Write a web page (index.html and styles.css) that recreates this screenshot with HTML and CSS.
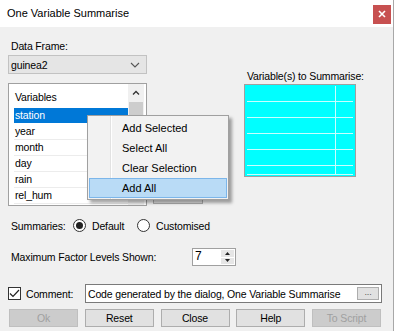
FILE: index.html
```html
<!DOCTYPE html>
<html lang="en">
<head>
    <meta charset="UTF-8">
    <title>One Variable Summarise</title>
    <link rel="stylesheet" href="styles.css">
</head>
<body>
    <div class="window">
        <div class="titlebar">
            <span class="title">One Variable Summarise</span>
            <span class="close-btn">
                <svg width="8" height="8" viewBox="0 0 8 8"><path d="M1 1 L7 7 M7 1 L1 7" stroke="#fff" stroke-width="1.6"/></svg>
            </span>
        </div>

        <div class="dialog">
            <div class="top-section">
                <div class="left-col">
                    <div class="label">Data Frame:</div>
                    <div class="combo">
                        <span>guinea2</span>
                        <svg width="10" height="6" viewBox="0 0 10 6"><path d="M1 1 L5 5 L9 1" fill="none" stroke="#555" stroke-width="1.1"/></svg>
                    </div>
                    <div class="listbox">
                        <div class="list-area">
                            <div class="list-header">Variables</div>
                            <div class="list-row selected">station</div>
                            <div class="list-row">year</div>
                            <div class="list-row">month</div>
                            <div class="list-row">day</div>
                            <div class="list-row">rain</div>
                            <div class="list-row">rel_hum</div>
                        </div>
                        <div class="scrollbar">
                            <div class="scroll-arrow">
                                <svg width="8" height="5" viewBox="0 0 8 5"><path d="M1 4.5 L4 1.5 L7 4.5" fill="none" stroke="#333" stroke-width="1.3"/></svg>
                            </div>
                            <div class="scroll-thumb"></div>
                        </div>
                    </div>
                </div>

                <div class="mid-col">
                    <div class="add-btn"></div>
                </div>

                <div class="right-col">
                    <div class="label">Variable(s) to Summarise:</div>
                    <div class="receiver">
                        <div class="cell"></div><div class="cell last"></div>
                        <div class="cell"></div><div class="cell last"></div>
                        <div class="cell"></div><div class="cell last"></div>
                        <div class="cell"></div><div class="cell last"></div>
                        <div class="cell"></div><div class="cell last"></div>
                        <div class="cell"></div><div class="cell last"></div>
                    </div>
                </div>
            </div>

            <div class="summaries-row">
                <span class="summaries-label">Summaries:</span>
                <span class="radio checked"></span>
                <span class="radio-text">Default</span>
                <span class="radio"></span>
                <span class="radio-text">Customised</span>
            </div>

            <div class="levels-row">
                <span class="levels-label">Maximum Factor Levels Shown:</span>
                <div class="updown">
                    <span class="updown-value">7</span>
                    <div class="spin">
                        <div class="spin-btn">
                            <svg width="5" height="3" viewBox="0 0 5 3"><path d="M0 3 L2.5 0 L5 3 Z" fill="#222"/></svg>
                        </div>
                        <div class="spin-btn">
                            <svg width="5" height="3" viewBox="0 0 5 3"><path d="M0 0 L2.5 3 L5 0 Z" fill="#222"/></svg>
                        </div>
                    </div>
                </div>
            </div>

            <div class="comment-row">
                <span class="checkbox">
                    <svg width="11" height="9" viewBox="0 0 11 9"><path d="M1 4.5 L4 7.5 L10 1" fill="none" stroke="#222" stroke-width="1.2"/></svg>
                </span>
                <span class="comment-label">Comment:</span>
                <div class="comment-box">
                    <span>Code generated by the dialog, One Variable Summarise</span>
                    <span class="dots-btn">...</span>
                </div>
            </div>

            <div class="button-row">
                <div class="btn disabled">Ok</div>
                <div class="btn">Reset</div>
                <div class="btn">Close</div>
                <div class="btn">Help</div>
                <div class="btn disabled">To Script</div>
            </div>
        </div>

        <div class="context-menu">
            <div class="menu-item">Add Selected</div>
            <div class="menu-item">Select All</div>
            <div class="menu-item">Clear Selection</div>
            <div class="menu-item hover">Add All</div>
        </div>
    </div>
</body>
</html>
```

FILE: styles.css
```css
body {
    margin: 0;
    background: #f0f0f0;
    font-family: 'Liberation Sans', Arial, sans-serif;
    font-size: 10.5px;
    letter-spacing: -0.15px;
    color: #000;
    white-space: nowrap;
}

.window {
    width: 393px;
    height: 331px;
    border-right: 1px solid #a8a8a8;
    position: relative;
    overflow: hidden;
}

.titlebar {
    height: 27px;
    background: #fff;
    display: flex;
    align-items: center;
    justify-content: space-between;
    padding-left: 7px;
    padding-right: 2px;
}

.title {
    font-size: 11px;
    letter-spacing: 0;
    margin-top: -1px;
}

.close-btn {
    width: 18px;
    height: 19px;
    background: #c75050;
    display: flex;
    align-items: center;
    justify-content: center;
    margin-top: 1px;
}

.dialog {
    padding-left: 8px;
}

.top-section {
    display: flex;
    height: 180px;
}

.left-col {
    width: 139px;
    flex-shrink: 0;
}

.label {
    line-height: 15px;
    padding-left: 3px;
}

.left-col .label {
    margin-top: 12px;
}

.combo {
    margin-top: 1px;
    height: 19px;
    box-sizing: border-box;
    background: #e5e5e5;
    border: 1px solid #c2c2c2;
    display: flex;
    align-items: center;
    justify-content: space-between;
    padding: 0 6px 0 2px;
}

.listbox {
    margin-top: 9px;
    height: 123px;
    box-sizing: border-box;
    background: #fff;
    border: 1px solid #a0a0a0;
    display: flex;
}

.list-area {
    flex: 1;
    padding-left: 5px;
}

.list-header {
    height: 24px;
    line-height: 26px;
    padding-left: 1px;
}

.list-row {
    height: 15px;
    line-height: 15px;
    padding-left: 1px;
    border-bottom: 1px solid #ececec;
}

.list-row.selected {
    background: #0078d7;
    color: #fff;
    border-bottom-color: #fff;
}

.scrollbar {
    width: 16px;
    margin-right: 2px;
    background: #f0f0f0;
    display: flex;
    flex-direction: column;
}

.scroll-arrow {
    height: 17px;
    display: flex;
    align-items: center;
    justify-content: center;
}

.scroll-thumb {
    margin: 1px 1px 0 1px;
    height: 40px;
    background: #cdcdcd;
}

.mid-col {
    width: 50px;
    flex-shrink: 0;
    margin-left: 6px;
    padding-top: 143px;
}

.add-btn {
    height: 34px;
    box-sizing: border-box;
    background: #e1e1e1;
    border: 1px solid #adadad;
}

.right-col {
    margin-left: 41px;
    width: 112px;
    flex-shrink: 0;
}

.right-col .label {
    margin-top: 42px;
    padding-left: 3px;
}

.receiver {
    height: 93px;
    box-sizing: border-box;
    background: #00ffff;
    border: 1px solid #a0a0a0;
    padding: 1px 2px;
    display: grid;
    grid-template-columns: 89px 1fr;
    grid-template-rows: repeat(5, 16px) 1fr;
}

.cell {
    border-bottom: 1px solid #c8ffff;
    border-right: 1px solid #c8ffff;
}

.cell.last {
    border-right: none;
}

.summaries-row {
    display: flex;
    align-items: center;
    height: 15px;
    margin-top: 11px;
    padding-left: 3px;
}

.summaries-label {
    width: 62px;
    flex-shrink: 0;
}

.radio {
    width: 11px;
    height: 11px;
    flex-shrink: 0;
    border: 1px solid #333;
    border-radius: 50%;
    background: #fff;
    display: flex;
    align-items: center;
    justify-content: center;
}

.radio.checked::after {
    content: '';
    width: 7px;
    height: 7px;
    border-radius: 50%;
    background: #222;
}

.radio-text {
    margin-left: 6px;
    width: 45px;
}

.levels-row {
    display: flex;
    align-items: center;
    margin-top: 15px;
    padding-left: 3px;
}

.levels-label {
    width: 181px;
    flex-shrink: 0;
}

.updown {
    width: 44px;
    height: 18px;
    box-sizing: border-box;
    background: #fff;
    border: 1px solid #a0a0a0;
    display: flex;
    justify-content: space-between;
}

.updown-value {
    padding-left: 2px;
    line-height: 15px;
    font-size: 12px;
}

.spin {
    width: 13px;
    margin: 1px 1px 1px 0;
    display: flex;
    flex-direction: column;
    gap: 1px;
}

.spin-btn {
    flex: 1;
    background: #e6e6e6;
    display: flex;
    align-items: center;
    justify-content: center;
}

.comment-row {
    display: flex;
    align-items: center;
    margin-top: 18px;
}

.checkbox {
    width: 13px;
    height: 13px;
    flex-shrink: 0;
    box-sizing: border-box;
    border: 1px solid #333;
    background: #fff;
    display: flex;
    align-items: center;
    justify-content: center;
}

.comment-label {
    margin-left: 5px;
    width: 59px;
    flex-shrink: 0;
}

.comment-box {
    width: 297px;
    height: 19px;
    flex-shrink: 0;
    box-sizing: border-box;
    background: #fff;
    border: 1px solid #7a7a7a;
    display: flex;
    align-items: center;
    justify-content: space-between;
    padding: 0 2px 0 2px;
}

.dots-btn {
    width: 22px;
    height: 13px;
    box-sizing: border-box;
    background: #e1e1e1;
    border: 1px solid #adadad;
    font-size: 9px;
    line-height: 8px;
    text-align: center;
    color: #555;
}

.button-row {
    display: flex;
    justify-content: space-between;
    width: 372px;
    margin-top: 6px;
    margin-left: 1px;
}

.btn {
    width: 69px;
    height: 18px;
    box-sizing: border-box;
    background: #e1e1e1;
    border: 1px solid #adadad;
    text-align: center;
    line-height: 16px;
}

.btn.disabled {
    background: #cccccc;
    border-color: #bfbfbf;
    color: #a0a0a0;
}

.context-menu {
    position: absolute;
    left: 87px;
    top: 115px;
    width: 142px;
    height: 85px;
    box-sizing: border-box;
    background: #f2f2f2 linear-gradient(90deg, #f2f2f2 22px, #e2e2e2 22px, #e2e2e2 23px, #fff 23px, #fff 24px, #f2f2f2 24px);
    border: 1px solid #a0a0a0;
    box-shadow: 3px 3px 3px rgba(0, 0, 0, 0.35);
    padding-top: 2px;
    font-size: 11px;
    letter-spacing: 0;
}

.menu-item {
    height: 20px;
    line-height: 20px;
    padding-left: 33px;
    margin: 0 1px;
    box-sizing: border-box;
}

.menu-item.hover {
    background: #b9dbf6;
    border: 1px solid #7cb6ea;
    line-height: 18px;
    padding-left: 32px;
}
```
